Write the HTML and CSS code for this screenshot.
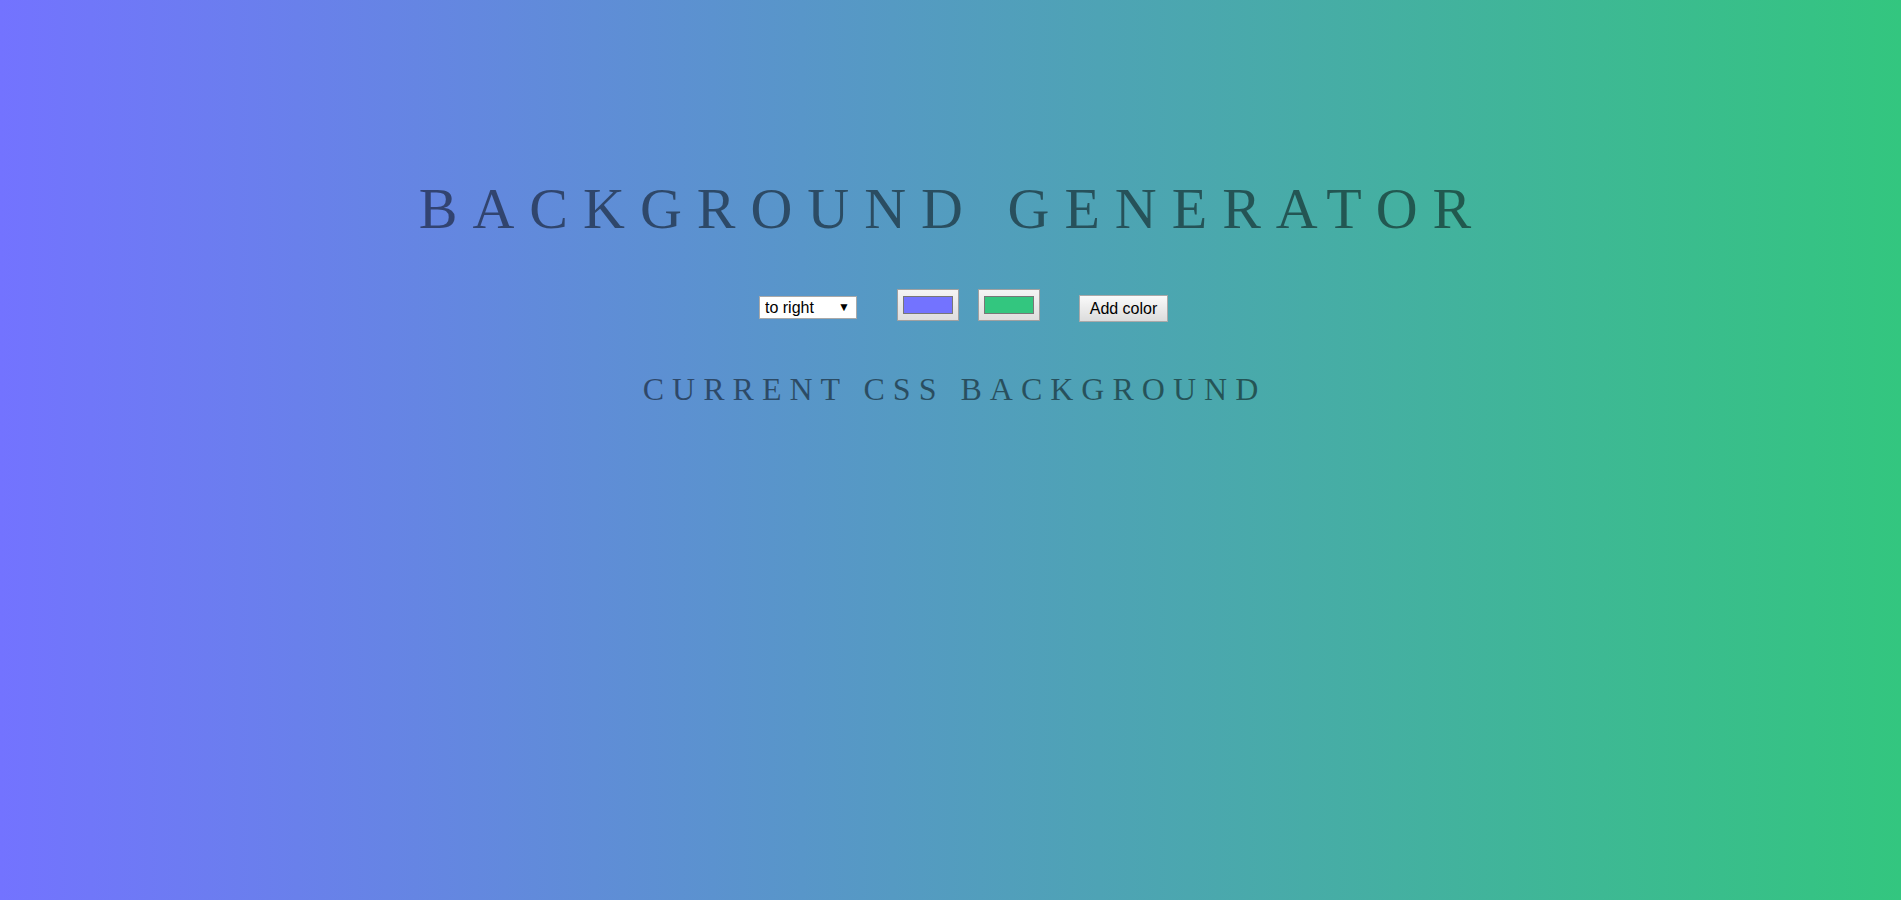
FILE: index.html
```html
<!DOCTYPE html>
<html>
<head>
<meta charset="utf-8">
<title>Background Generator</title>
<link rel="stylesheet" href="styles.css">
</head>
<body>
<main class="page">
  <h1 class="title">Background Generator</h1>
  <div class="controls">
    <div class="select-wrap">
      <select class="direction">
        <option>to right</option>
      </select>
      <span class="arrow">▼</span>
    </div>
    <button class="color-input color-a" type="button"><span class="swatch swatch-a"></span></button>
    <button class="color-input color-b" type="button"><span class="swatch swatch-b"></span></button>
    <button class="add-btn" type="button">Add color</button>
  </div>
  <h3 class="subtitle">Current CSS Background</h3>
</main>
</body>
</html>
```

FILE: styles.css
```css
html, body {
  margin: 0;
  height: 100%;
}

body {
  background: linear-gradient(to right, #7373ff, #33c67f);
  font-family: "Liberation Serif", "Times New Roman", serif;
  color: rgba(0, 0, 0, 0.5);
  text-align: center;
  text-transform: uppercase;
}

.page {
  padding-top: 174px;
}

.title {
  margin: 0;
  font-size: 58px;
  font-weight: normal;
  letter-spacing: 15px;
  line-height: 69px;
  padding-left: 4px;
}

.controls {
  display: flex;
  justify-content: center;
  align-items: flex-start;
  margin-top: 46px;
  padding-left: 26px;
  text-transform: none;
  font-family: "Liberation Sans", Arial, sans-serif;
  font-size: 16px;
  color: #000;
}

.select-wrap {
  position: relative;
  margin-top: 7px;
  margin-right: 40px;
}

.direction {
  appearance: none;
  -webkit-appearance: none;
  box-sizing: border-box;
  width: 98px;
  height: 23px;
  margin: 0;
  padding: 0 0 0 5px;
  border: 1px solid #a9a9a9;
  border-radius: 0;
  background: #fff;
  font-family: inherit;
  font-size: 16px;
  color: #000;
  text-align: left;
}

.arrow {
  position: absolute;
  right: 7px;
  top: 5px;
  font-size: 12px;
  line-height: 13px;
  color: #000;
  pointer-events: none;
}

.color-input {
  box-sizing: border-box;
  width: 62px;
  height: 32px;
  margin: 0;
  padding: 6px 5px;
  border: 1px solid #a0a0a0;
  border-radius: 0;
  background: linear-gradient(#f4f4f4, #dedede);
  display: flex;
  align-items: stretch;
}

.color-a {
  margin-right: 19px;
}

.color-b {
  margin-right: 39px;
}

.swatch {
  flex: 1;
  border: 1px solid #777;
}

.swatch-a {
  background: #7373ff;
}

.swatch-b {
  background: #33c67f;
}

.add-btn {
  box-sizing: border-box;
  width: 89px;
  height: 27px;
  margin: 6px 0 0;
  padding: 0;
  border: 1px solid #a9a9a9;
  border-radius: 0;
  background: linear-gradient(#fafafa, #dcdcdc);
  font-family: inherit;
  font-size: 16px;
  color: #000;
}

.subtitle {
  margin: 49px 0 0;
  font-size: 32px;
  font-weight: normal;
  letter-spacing: 8px;
  line-height: normal;
  padding-left: 8px;
}
```
